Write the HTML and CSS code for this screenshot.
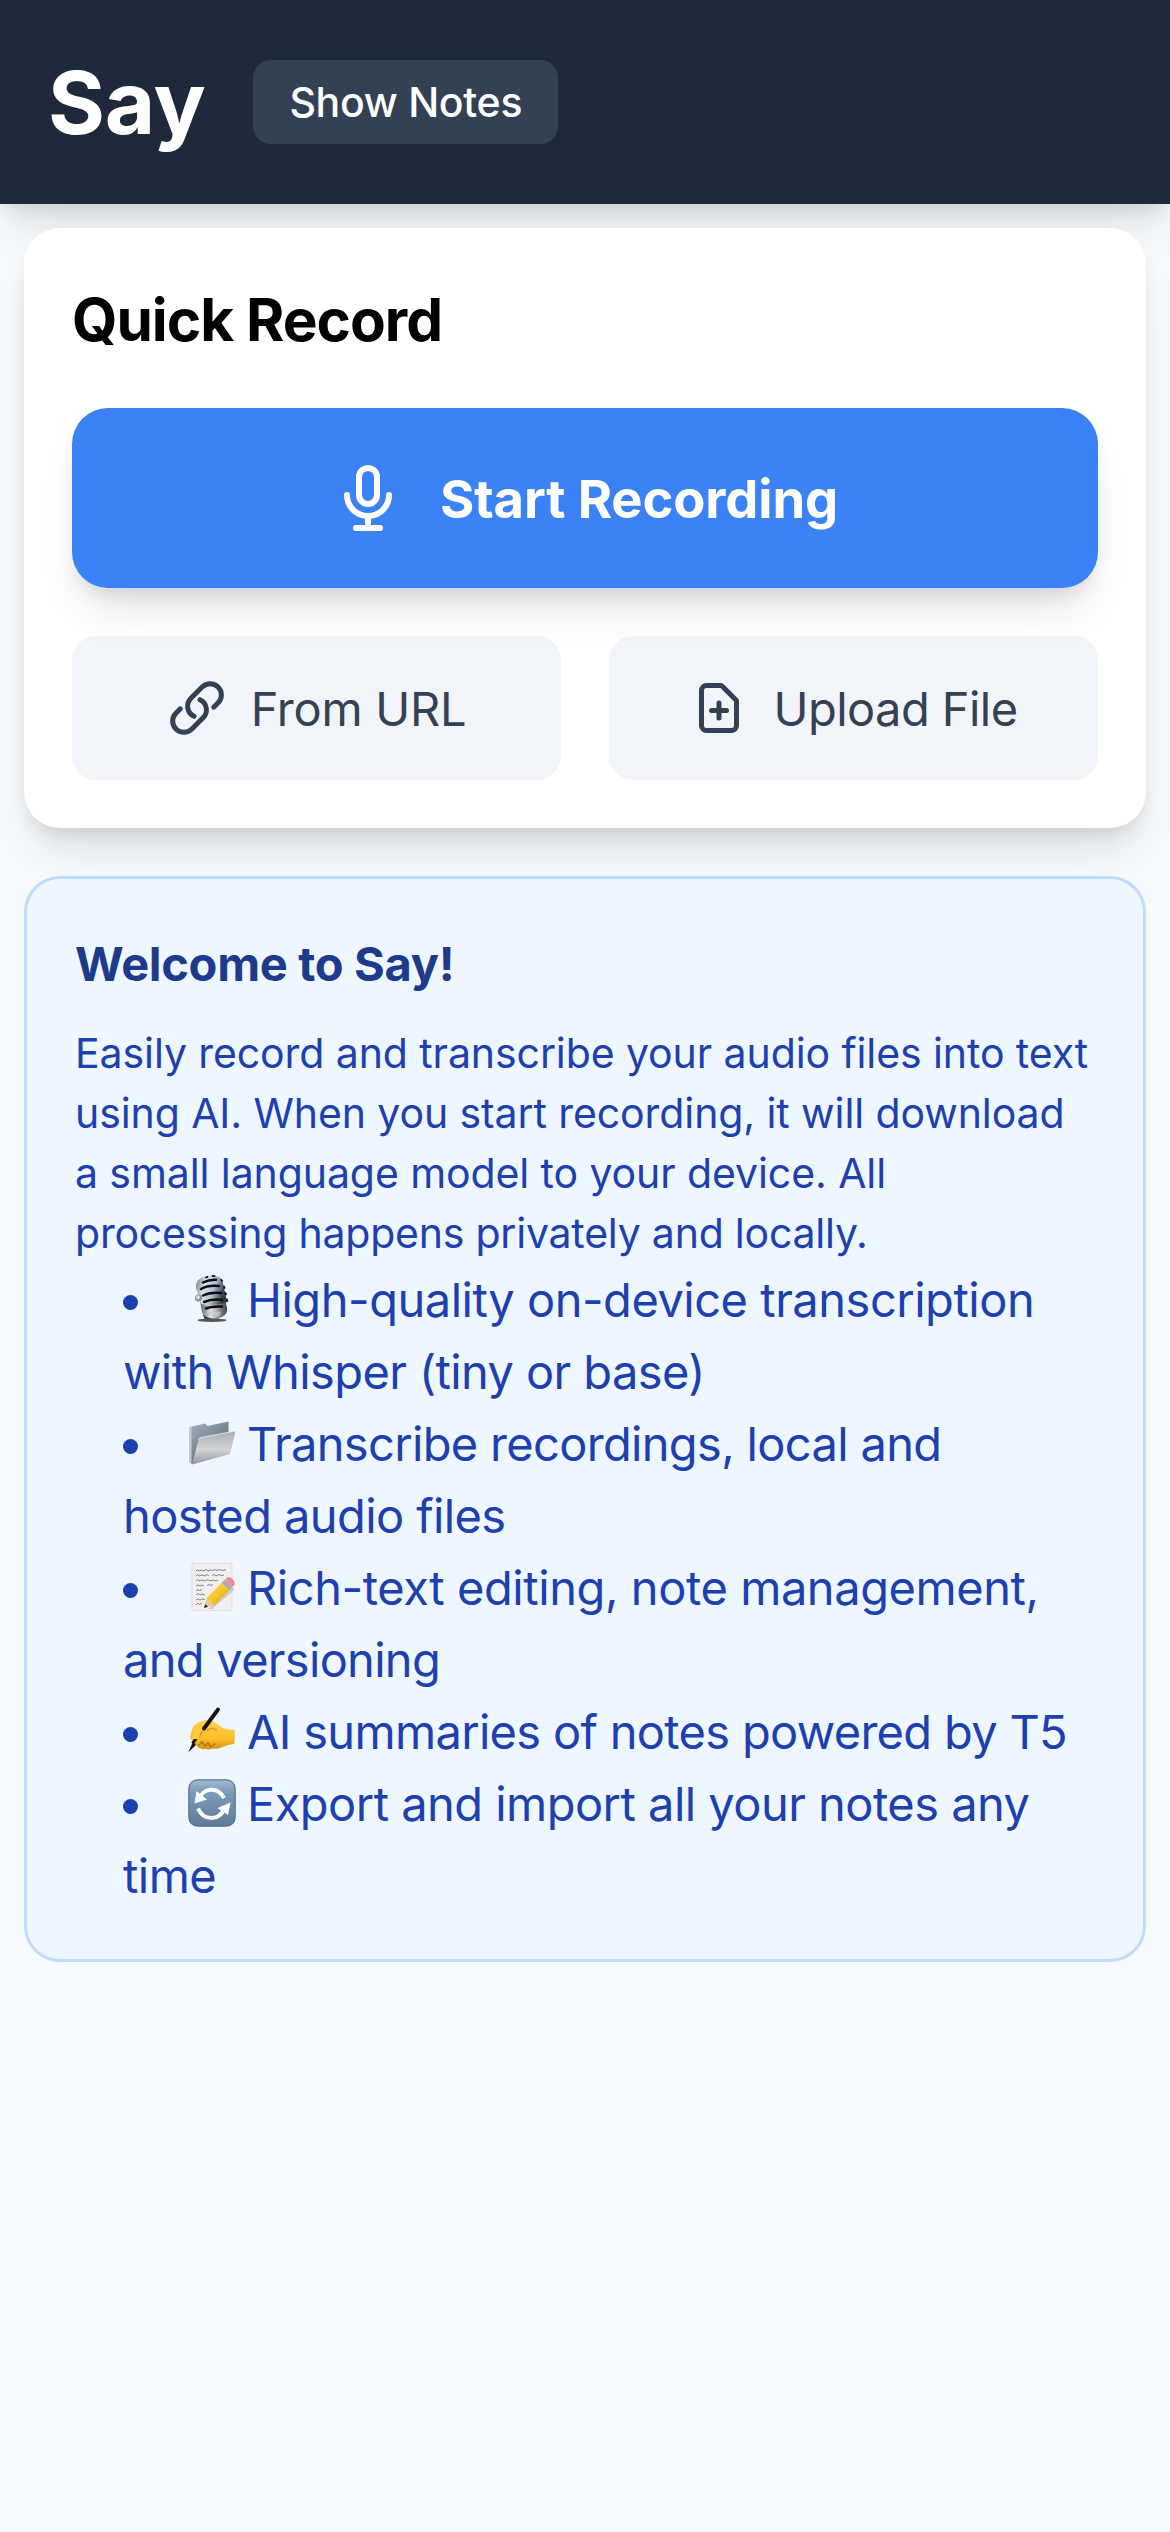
FILE: index.html
```html
<!DOCTYPE html>
<html lang="en">
<head>
<meta charset="utf-8">
<title>Say</title>
<link rel="stylesheet" href="styles.css">
</head>
<body>
<header class="header">
  <h1 class="brand">Say</h1>
  <button class="notes-btn">Show Notes</button>
</header>
<main class="main">
  <section class="card">
    <h2 class="card-title">Quick Record</h2>
    <button class="record-btn">
      <svg class="icon-lg" viewBox="0 0 24 24"><path d="M19 11a7 7 0 01-7 7m0 0a7 7 0 01-7-7m7 7v4m0 0H8m4 0h4m-4-8a3 3 0 01-3-3V5a3 3 0 116 0v6a3 3 0 01-3 3z"/></svg>
      <span class="label-record">Start Recording</span>
    </button>
    <div class="sources">
      <button class="source-btn">
        <svg class="icon" viewBox="0 0 24 24"><path d="M13.19 8.688a4.5 4.5 0 0 1 1.242 7.244l-4.5 4.5a4.5 4.5 0 0 1-6.364-6.364l1.757-1.757m13.35-.622 1.757-1.757a4.5 4.5 0 0 0-6.364-6.364l-4.5 4.5a4.5 4.5 0 0 0 1.242 7.244"/></svg>
        <span class="label-url">From URL</span>
      </button>
      <button class="source-btn">
        <svg class="icon" viewBox="0 0 24 24"><path d="M9 13h6m-3-3v6m5 5H7a2 2 0 01-2-2V5a2 2 0 012-2h5.586a1 1 0 01.707.293l5.414 5.414a1 1 0 01.293.707V19a2 2 0 01-2 2z"/></svg>
        <span class="label-file">Upload File</span>
      </button>
    </div>
  </section>
  <section class="welcome">
    <h3 class="welcome-title">Welcome to Say!</h3>
    <p class="intro">Easily record and transcribe your audio files into text<br>using AI. When you start recording, it will download<br>a small language model to your device. All<br><span class="tight">processing happens privately and locally.</span></p>
    <ul class="features">
      <li class="f-mic"><svg class="emoji" viewBox="0 0 48 48">
        <defs>
          <linearGradient id="chrome" x1="0" y1="0" x2="1" y2="0.25"><stop offset="0" stop-color="#6d7278"/><stop offset=".35" stop-color="#dfe8f0"/><stop offset=".65" stop-color="#aebccb"/><stop offset="1" stop-color="#33373c"/></linearGradient>
          <linearGradient id="chromeLow" x1="0" y1="0" x2="1" y2="0"><stop offset="0" stop-color="#54575b"/><stop offset=".4" stop-color="#e6e6e6"/><stop offset="1" stop-color="#3b3c3e"/></linearGradient>
        </defs>
        <path d="M15 40h17l-2 5H17z" fill="#3a3b3d"/>
        <ellipse cx="24" cy="45.3" rx="14.5" ry="1.7" fill="#55585b"/>
        <path d="M12 26l25-2 2 9c1 6-4 10-11 10.500S15 41 14 37z" fill="url(#chromeLow)"/>
        <path d="M8 13C7 6 13 1 22 .5S34 3 35 8l4 19c-6 3-18 4-26 2z" fill="url(#chrome)"/>
        <g fill="none" stroke="#0b0d10" stroke-width="2.500" stroke-linecap="round"><path d="M15 7.500c4-2.200 8-3 13-2.800M13 14c5-3 12-3.700 18-3M15 20.500c5-2.600 12-3.300 18-2.500M16 27c5-2.300 12-3 18-2.200M18 33.500c4-1.800 10-2.300 16-2"/><path d="M18 2.500l1.500-.6m5-1l2 .2M33.500 5l.5 1M36 11.500l.5 1.500M37.500 18l.4 1.500M39 24.500l.3 1.500" stroke-width="1.800"/></g>
        <path d="M21 37c4-1 8-1 12 0l-2 4c-3 1-6 1-8 0z" fill="#c9cacc" opacity=".7"/>
        <circle cx="10.500" cy="23" r="3.600" fill="#8b9096"/><circle cx="10" cy="22.300" r="2" fill="#d5d9de"/>
      </svg>High-quality on-device transcription<br><span class="ls-a">with Whisper (tiny or base)</span></li>
      <li class="f-folder"><svg class="emoji" viewBox="0 0 48 48">
        <defs>
          <linearGradient id="folderBack" x1="0" y1="0" x2=".7" y2="1"><stop offset="0" stop-color="#a9b5bd"/><stop offset="1" stop-color="#4f606d"/></linearGradient>
          <linearGradient id="folderFront" x1="0" y1="0" x2="0" y2="1"><stop offset="0" stop-color="#a8adb2"/><stop offset=".55" stop-color="#d2d4d7"/><stop offset="1" stop-color="#94989c"/></linearGradient>
        </defs>
        <path d="M1.500 8l16-3.500 1.500 2.500L40.500 2.500V31L4 45l-2.500-2z" fill="url(#folderBack)"/>
        <path d="M1.500 8l2-.4V44l-2-1z" fill="#c5cdd3"/>
        <path d="M10.500 20.500Q11 19 13 18.500L47.500 12l-5 21.500q-.4 1.600-2 2L4 45.500z" fill="url(#folderFront)"/>
        <path d="M10.500 20.500Q11 19 13 18.500L47.500 12" fill="none" stroke="#e6e9eb" stroke-width=".9"/>
      </svg>Transcribe recordings, local and<br><span class="ls-a">hosted audio files</span></li>
      <li class="f-memo"><svg class="emoji" viewBox="0 0 48 48">
        <defs><linearGradient id="pencil" x1="0" y1="0" x2="1" y2="1"><stop offset="0" stop-color="#ffe169"/><stop offset=".5" stop-color="#f7c62b"/><stop offset="1" stop-color="#c98b12"/></linearGradient></defs>
        <path d="M4 .5h40V47.600H4z" fill="#f1f0ee" stroke="#d6d6d5" stroke-width=".7"/>
        <g fill="none" stroke="#777" stroke-width=".9"><path d="M8 8l2-1.500 1 1.500 3-1 2 1 2-1.500 2 1.500 3-1 2 .5 2-1 2 1 3-1 2 1 4-.7"/><path d="M8 13l2-1.500 1 1.500 3-1 3 1 2-1.500 2 1.500m3-.5l2-1 2 1.500 3-1.500 2 1 3-.5"/><path d="M8 18l2-1.500 1 1.500 3-1 3 1 3-1.500 2 1.500 3-1 3 1 2-1"/><path d="M8 23l2-1 2 1 2-1 2 1m3-.5l2-1 2 1 2-1"/><path d="M8 27.500l2-.8 2 .8 2-.8M8 32l2-1.500 2 1.500 2-1 3 1M8 37l2-1.200 2 1.200 3-1 2 .5M8 42l2-2 1 1.500 3-1"/></g>
        <path d="M20 46L45 24l1 3-22 19z" fill="#777" opacity=".3"/>
        <path d="M16 45l3.200-10.500 6.800 7.500z" fill="#edc48d"/>
        <path d="M16 45l1.200-3.800 2.800 2.600z" fill="#242424"/>
        <path d="M19 34.500L36.500 17l7 8L26 42.500z" fill="url(#pencil)"/>
        <path d="M34 19.500l3.500-3.500 7 8-3.500 3.500z" fill="#a9adb1"/>
        <path d="M37.500 16l1.500-1.500c3-2 9 4 7.500 7.500l-2 2z" fill="#ed8b91"/>
      </svg>Rich-text editing, note management,<br><span class="ls-b">and versioning</span></li>
      <li class="f-hand"><svg class="emoji" viewBox="0 0 48 48">
        <defs><linearGradient id="skin" x1="0" y1="0" x2="0" y2="1"><stop offset="0" stop-color="#ffd54a"/><stop offset=".65" stop-color="#f9bd28"/><stop offset="1" stop-color="#d98c10"/></linearGradient></defs>
        <path d="M2 31L4 22C6 17 12 14 19 13c3-.3 6 .8 9 3l6 4.500c4 1.700 8 2 12.500 2.500.8 4 .5 9-.3 14-5 .8-9 1.500-13 3.500-3 1.400-6 1.700-9 1-3 1.700-5 1-7 .2-2 .9-4 .4-5-.7-2 .3-3-1-3-2z" fill="url(#skin)"/>
        <path d="M11 38l3-3 3 4 3-3 3 4 4-3" fill="none" stroke="#b5720d" stroke-width="1.500" stroke-linecap="round"/>
        <path d="M19 24c2-3 6-3 10-1" fill="none" stroke="#e09a18" stroke-width="1.500"/>
        <path d="M15.500 21L4.500 36.500" stroke="#16120f" stroke-width="3"/>
        <path d="M5 34.500L.3 45.300 8 38z" fill="#16120f"/>
        <path d="M4 32C4 24 9 19 15 18c4-.6 5 2 2 4.500-4 2.500-5 5.500-5.500 9.500z" fill="#ffcb3b"/>
        <path d="M11.500 31c.5-4 2-6.500 5-8.800" fill="none" stroke="#d8931a" stroke-width="1"/>
        <path d="M30 2.500L16 21.500" stroke="#16120f" stroke-width="3.800" stroke-linecap="round"/>
      </svg>AI summaries of notes powered by T5</li>
      <li class="f-sync"><svg class="emoji" viewBox="0 0 48 48">
        <defs><linearGradient id="tile" x1="0" y1="0" x2="0" y2="1"><stop offset="0" stop-color="#a3bbd1"/><stop offset=".25" stop-color="#7d9cb9"/><stop offset="1" stop-color="#5c7b99"/></linearGradient></defs>
        <rect x=".8" y=".8" width="46.400" height="46.400" rx="9" fill="url(#tile)" stroke="#57748f" stroke-width="1.200"/>
        <g fill="none" stroke="#fff" stroke-width="4"><path d="M11.500 19.500C14.500 9.500 29 6.500 36 19"/><path d="M10 29.500C15.500 42 31.500 42.500 36.500 29"/></g>
        <path d="M8.500 12L6.500 24.500 19 20.500zM42.500 23.500L29.500 29 40 36z" fill="#fff"/>
      </svg>Export and import all your notes any<br>time</li>
    </ul>
  </section>
</main>
</body>
</html>
```
FILE: styles.css
```css
* { box-sizing: border-box; margin: 0; padding: 0; }

body {
  min-height: 2532px;
  background: #f7fafd;
  font-family: Inter, "Liberation Sans", sans-serif;
  font-optical-sizing: none;
  font-weight: 430;
  color: #000;
}

button { border: 0; font: inherit; white-space: nowrap; }

.header {
  display: flex;
  align-items: center;
  gap: 47.6px;
  height: 204px;
  padding: 0 48px;
  background: #1e293b;
  box-shadow: 0 30px 45px -9px rgba(0, 0, 0, .1), 0 12px 18px -6px rgba(0, 0, 0, .1);
}

.brand {
  padding-top: 1px;
  font-size: 87px;
  font-weight: 720;
  line-height: 108px;
  letter-spacing: -.2px;
  color: #fff;
}

.notes-btn {
  height: 84px;
  padding: 0 36px;
  border-radius: 18px;
  background: #334155;
  font-size: 41px;
  font-weight: 500;
  letter-spacing: -.28px;
  color: #fff;
}

.main {
  display: flex;
  flex-direction: column;
  gap: 48px;
  padding: 24px;
}

.card {
  position: relative;
  padding: 48px;
  border-radius: 36px;
  background: #fff;
  box-shadow: 0 30px 45px -9px rgba(0, 0, 0, .1), 0 12px 18px -6px rgba(0, 0, 0, .1);
}

.card-title {
  height: 84px;
  margin-bottom: 48px;
  padding-top: 2px;
  font-size: 58.5px;
  font-weight: 650;
  line-height: 84px;
  letter-spacing: -1px;
}

.record-btn {
  position: relative;
  display: flex;
  align-items: center;
  justify-content: center;
  gap: 36px;
  width: 100%;
  height: 180px;
  border-radius: 36px;
  background: #3b82f6;
  box-shadow: 0 30px 45px -9px rgba(0, 0, 0, .1), 0 12px 18px -6px rgba(0, 0, 0, .1);
  font-size: 52.5px;
  font-weight: 650;
  letter-spacing: -.12px;
  color: #fff;
}
.label-record { padding-top: 1px; }

.icon, .icon-lg {
  flex: none;
  fill: none;
  stroke: currentColor;
  stroke-width: 2;
  stroke-linecap: round;
  stroke-linejoin: round;
}
.icon { width: 60px; height: 60px; }
.icon-lg { width: 72px; height: 72px; }

.sources {
  display: grid;
  grid-template-columns: 1fr 1fr;
  gap: 48px;
  margin-top: 48px;
}

.source-btn {
  display: flex;
  align-items: center;
  justify-content: center;
  gap: 24px;
  height: 144px;
  border-radius: 24px;
  background: #f1f5f9;
  font-size: 47px;
  color: #334155;
}
.label-url { letter-spacing: -.25px; }
.label-file { letter-spacing: -.55px; }

.welcome {
  position: relative;
  padding: 48px 48px 47px;
  border: 3px solid #bfdbfe;
  border-radius: 36px;
  background: #eef6ff;
}

.welcome-title {
  margin-bottom: 23px;
  padding-top: 1px;
  font-size: 47px;
  font-weight: 650;
  line-height: 72px;
  letter-spacing: -.3px;
  color: #1e3a8a;
}

.intro {
  font-size: 41px;
  line-height: 60px;
  letter-spacing: -.09px;
  white-space: nowrap;
  color: #1e40af;
}
.tight { letter-spacing: -.22px; }

.features {
  padding-top: 1px;
  padding-left: 48px;
  list-style: none;
  font-size: 47px;
  line-height: 72px;
  white-space: nowrap;
  color: #1e40af;
}

.features li::before {
  content: "";
  display: inline-block;
  width: 15px;
  height: 15px;
  margin-right: 50px;
  border-radius: 50%;
  background: currentColor;
  vertical-align: 7px;
}

.emoji {
  width: 48px;
  height: 48px;
  margin-right: 11px;
  vertical-align: -6px;
}

.f-mic { letter-spacing: -.48px; }
.f-folder { letter-spacing: -.67px; }
.f-memo { letter-spacing: -.43px; }
.f-hand { letter-spacing: -.68px; }
.f-sync { letter-spacing: -.53px; }
.ls-a { letter-spacing: -.59px; }
.ls-b { letter-spacing: -.7px; }
```
